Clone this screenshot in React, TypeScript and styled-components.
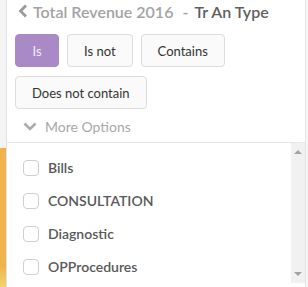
import React from "react";
import styled, { createGlobalStyle } from "styled-components";

const Global = createGlobalStyle`
  html, body { margin: 0; padding: 0; background: #f7f7f7; }
  body { font-family: Lato, "Open Sans", sans-serif; }
  * { box-sizing: border-box; }
`;

const Page = styled.div`
  display: flex;
  width: 308px;
  height: 287px;
  overflow: hidden;
`;

const Backdrop = styled.div`
  width: 6px;
  display: flex;
  flex-direction: column;
  flex-shrink: 0;
`;

const BackdropTop = styled.div`
  height: 148px;
  background: #f4f4f4;
`;

const OrangeStrip = styled.div`
  flex: 1;
  background: linear-gradient(to bottom, #efb24f 0%, #efb24f 85%, #f3d36e 100%);
`;

const Panel = styled.div`
  width: 300px;
  flex-shrink: 0;
  background: #fff;
  border-left: 1px solid #e2e2e2;
  border-right: 1px solid #e4e4e4;
  display: flex;
  flex-direction: column;
`;

const Header = styled.div`
  display: flex;
  align-items: center;
  height: 22px;
  padding-left: 11px;
  gap: 5px;
  white-space: nowrap;
`;

const Crumb = styled.span<{ $dark?: boolean }>`
  font-size: 16px;
  font-weight: 600;
  color: ${(p) => (p.$dark ? "#5f5f5f" : "#a3a3a3")};
`;

const Dash = styled.span`
  font-size: 16px;
  font-weight: 600;
  color: #a3a3a3;
  margin: 0 6px 0 9px;
`;

const Buttons = styled.div`
  display: flex;
  flex-wrap: wrap;
  gap: 9px 8px;
  padding: 12px 8px 0 8px;
`;

const OpButton = styled.button<{ $active?: boolean }>`
  height: 33px;
  min-width: 44px;
  padding: 0 16px;
  border-radius: 4px;
  border: 1px solid ${(p) => (p.$active ? "#a98ac7" : "#dcdcdc")};
  background: ${(p) => (p.$active ? "#a98ac7" : "#fafafa")};
  color: ${(p) => (p.$active ? "#f2ecf8" : "#333")};
  font-family: Lato, sans-serif;
  font-size: 13px;
  cursor: pointer;
`;

const More = styled.div`
  display: flex;
  align-items: center;
  gap: 8px;
  padding: 9px 0 8px 16px;
  height: 34px;
  color: #a8a8a8;
  font-size: 14px;
  border-bottom: 1px solid #e6e6e6;
`;

const ListArea = styled.div`
  display: flex;
  height: 140px;
`;

const List = styled.div`
  flex: 1;
  padding: 8px 0 0 16px;
  display: flex;
  flex-direction: column;
`;

const Row = styled.label`
  display: flex;
  align-items: center;
  gap: 9px;
  height: 33px;
  font-size: 14px;
  font-weight: 600;
  color: #585858;
`;

const Box = styled.span`
  width: 16px;
  height: 16px;
  border: 1px solid #cfcfcf;
  border-radius: 4px;
  background: #fff;
`;

const Scrollbar = styled.div`
  width: 14px;
  background: #f1f1f1;
  display: flex;
  flex-direction: column;
  justify-content: space-between;
  align-items: center;
  padding: 6px 0 6px;
`;

const items = ["Bills", "CONSULTATION", "Diagnostic", "OPProcedures"];

export default function App() {
  return (
    <>
      <Global />
      <Page>
        <Backdrop>
          <BackdropTop />
          <OrangeStrip />
        </Backdrop>
        <Panel>
          <Header>
            <svg width="10" height="14" viewBox="0 0 10 14">
              <polyline points="8,1.5 2.5,7 8,12.5" fill="none" stroke="#9a9a9a" strokeWidth="2.8" />
            </svg>
            <span>
              <Crumb>Total Revenue 2016</Crumb>
              <Dash>-</Dash>
              <Crumb $dark>Tr An Type</Crumb>
            </span>
          </Header>
          <Buttons>
            <OpButton $active>Is</OpButton>
            <OpButton>Is not</OpButton>
            <OpButton>Contains</OpButton>
            <OpButton>Does not contain</OpButton>
          </Buttons>
          <More>
            <svg width="14" height="9" viewBox="0 0 14 9">
              <polyline points="1.5,1.5 7,7 12.5,1.5" fill="none" stroke="#ababab" strokeWidth="2.6" />
            </svg>
            More Options
          </More>
          <ListArea>
            <List>
              {items.map((t) => (
                <Row key={t}>
                  <Box />
                  {t}
                </Row>
              ))}
            </List>
            <Scrollbar>
              <svg width="8" height="5" viewBox="0 0 8 5">
                <polygon points="0,5 4,1 8,5" fill="#a3a3a3" />
              </svg>
              <svg width="8" height="5" viewBox="0 0 8 5">
                <polygon points="0,0 8,0 4,4" fill="#a3a3a3" />
              </svg>
            </Scrollbar>
          </ListArea>
        </Panel>
      </Page>
    </>
  );
}
